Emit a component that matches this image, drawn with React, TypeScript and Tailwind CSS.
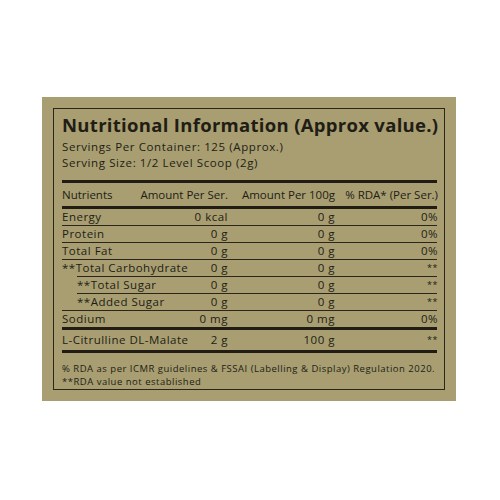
const rows = [
    { name: "Energy", ser: "0 kcal", per100: "0 g", rda: "0%", indent: false, line: "full" },
    { name: "Protein", ser: "0 g", per100: "0 g", rda: "0%", indent: false, line: "full" },
    { name: "Total Fat", ser: "0 g", per100: "0 g", rda: "0%", indent: false, line: "full" },
    { name: "**Total Carbohydrate", ser: "0 g", per100: "0 g", rda: "**", indent: false, line: "indent" },
    { name: "**Total Sugar", ser: "0 g", per100: "0 g", rda: "**", indent: true, line: "indent" },
    { name: "**Added Sugar", ser: "0 g", per100: "0 g", rda: "**", indent: true, line: "full" },
    { name: "Sodium", ser: "0 mg", per100: "0 mg", rda: "0%", indent: false, line: "none" },
]

const App = () => {
    return (
        <div className="w-[500px] h-[500px] bg-white pt-[97px] pl-[42px]" style={{ fontFamily: "'Open Sans', 'Liberation Sans', sans-serif" }}>
            <div className="w-[414px] h-[304px] bg-[#a89e71] p-[11px] text-[#211d15]">
                <div className="h-full border border-[#2a2619] pl-[8px] pr-[7px] pt-[4px]">
                    <h1 className="text-[18.5px] leading-[23px] font-bold tracking-[0.3px] whitespace-nowrap">Nutritional Information (Approx value.)</h1>
                    <div className="mt-[3px] text-[11.5px] leading-[16px] tracking-[0.6px]">
                        <p>Servings Per Container: 125 (Approx.)</p>
                        <p>Serving Size: 1/2 Level Scoop (2g)</p>
                    </div>

                    <div className="mt-[9px] h-[3px] bg-[#211d15]" />
                    <div className="grid grid-cols-[78px_88px_107px_103px] h-[23px] items-center text-[11.5px] leading-[23px] whitespace-nowrap">
                        <span>Nutrients</span>
                        <span className="text-right">Amount Per Ser.</span>
                        <span className="text-right">Amount Per 100g</span>
                        <span className="text-right">% RDA* (Per Ser.)</span>
                    </div>
                    <div className="h-[3px] bg-[#211d15]" />

                    {rows.map((r) => (
                        <div key={r.name}>
                            <div className="grid grid-cols-[78px_88px_107px_103px] h-[16px] text-[11.5px] leading-[16px] tracking-[0.5px] whitespace-nowrap">
                                <span className={r.indent ? "pl-[15px]" : ""}>{r.name}</span>
                                <span className="text-right">{r.ser}</span>
                                <span className="text-right">{r.per100}</span>
                                <span className={r.rda === "**" ? "text-right text-[9px]" : "text-right"}>{r.rda}</span>
                            </div>
                            {r.line === "full" && <div className="h-px bg-[#2a2619]" />}
                            {r.line === "indent" && <div className="h-px bg-[#2a2619] ml-[15px]" />}
                        </div>
                    ))}
                    <div className="h-[3px] bg-[#211d15]" />

                    <div className="grid grid-cols-[78px_88px_107px_103px] h-[20px] items-center text-[11.5px] leading-[20px] tracking-[0.5px] whitespace-nowrap">
                        <span>L-Citrulline DL-Malate</span>
                        <span className="text-right">2 g</span>
                        <span className="text-right">100 g</span>
                        <span className="text-right text-[9px]">**</span>
                    </div>
                    <div className="h-[3px] bg-[#211d15]" />

                    <div className="mt-[9px] text-[9.5px] leading-[13px] tracking-[0.5px] whitespace-nowrap">
                        <p>% RDA as per ICMR guidelines &amp; FSSAI (Labelling &amp; Display) Regulation 2020.</p>
                        <p>**RDA value not established</p>
                    </div>
                </div>
            </div>
        </div>
    )
}

export default App;
